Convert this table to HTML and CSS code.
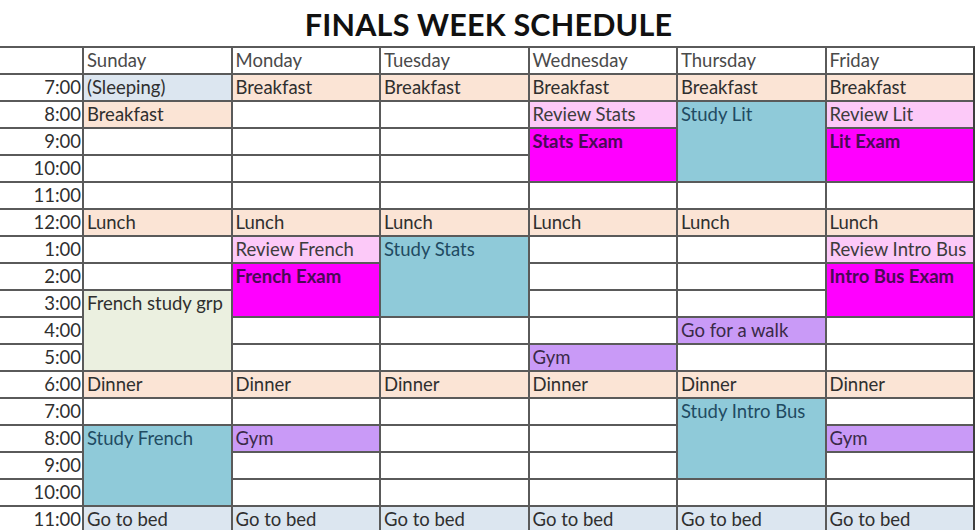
FILE: index.html
```html
<!DOCTYPE html>
<html>
<head>
<meta charset="utf-8">
<link rel="stylesheet" href="styles.css">
</head>
<body>
<div class="page">
  <h1 class="title">FINALS WEEK SCHEDULE</h1>
  <div class="sheet">
    <!-- header row -->
    <div class="c time" style="grid-area:1/1"></div>
    <div class="c day" style="grid-area:1/2">Sunday</div>
    <div class="c day" style="grid-area:1/3">Monday</div>
    <div class="c day" style="grid-area:1/4">Tuesday</div>
    <div class="c day" style="grid-area:1/5">Wednesday</div>
    <div class="c day" style="grid-area:1/6">Thursday</div>
    <div class="c day" style="grid-area:1/7">Friday</div>

    <!-- time labels -->
    <div class="c time" style="grid-area:2/1">7:00</div>
    <div class="c time" style="grid-area:3/1">8:00</div>
    <div class="c time" style="grid-area:4/1">9:00</div>
    <div class="c time" style="grid-area:5/1">10:00</div>
    <div class="c time" style="grid-area:6/1">11:00</div>
    <div class="c time" style="grid-area:7/1">12:00</div>
    <div class="c time" style="grid-area:8/1">1:00</div>
    <div class="c time" style="grid-area:9/1">2:00</div>
    <div class="c time" style="grid-area:10/1">3:00</div>
    <div class="c time" style="grid-area:11/1">4:00</div>
    <div class="c time" style="grid-area:12/1">5:00</div>
    <div class="c time" style="grid-area:13/1">6:00</div>
    <div class="c time" style="grid-area:14/1">7:00</div>
    <div class="c time" style="grid-area:15/1">8:00</div>
    <div class="c time" style="grid-area:16/1">9:00</div>
    <div class="c time" style="grid-area:17/1">10:00</div>
    <div class="c time" style="grid-area:18/1">11:00</div>

    <!-- Sunday -->
    <div class="c sleep" style="grid-area:2/2">(Sleeping)</div>
    <div class="c meal" style="grid-area:3/2">Breakfast</div>
    <div class="c" style="grid-area:4/2"></div>
    <div class="c" style="grid-area:5/2"></div>
    <div class="c" style="grid-area:6/2"></div>
    <div class="c meal" style="grid-area:7/2">Lunch</div>
    <div class="c" style="grid-area:8/2"></div>
    <div class="c" style="grid-area:9/2"></div>
    <div class="c group" style="grid-area:10/2/13/3">French study grp</div>
    <div class="c meal" style="grid-area:13/2">Dinner</div>
    <div class="c" style="grid-area:14/2"></div>
    <div class="c study" style="grid-area:15/2/18/3">Study French</div>
    <div class="c sleep" style="grid-area:18/2">Go to bed</div>

    <!-- Monday -->
    <div class="c meal" style="grid-area:2/3">Breakfast</div>
    <div class="c" style="grid-area:3/3"></div>
    <div class="c" style="grid-area:4/3"></div>
    <div class="c" style="grid-area:5/3"></div>
    <div class="c" style="grid-area:6/3"></div>
    <div class="c meal" style="grid-area:7/3">Lunch</div>
    <div class="c review" style="grid-area:8/3">Review French</div>
    <div class="c exam" style="grid-area:9/3/11/4">French Exam</div>
    <div class="c" style="grid-area:11/3"></div>
    <div class="c" style="grid-area:12/3"></div>
    <div class="c meal" style="grid-area:13/3">Dinner</div>
    <div class="c" style="grid-area:14/3"></div>
    <div class="c gym" style="grid-area:15/3">Gym</div>
    <div class="c" style="grid-area:16/3"></div>
    <div class="c" style="grid-area:17/3"></div>
    <div class="c sleep" style="grid-area:18/3">Go to bed</div>

    <!-- Tuesday -->
    <div class="c meal" style="grid-area:2/4">Breakfast</div>
    <div class="c" style="grid-area:3/4"></div>
    <div class="c" style="grid-area:4/4"></div>
    <div class="c" style="grid-area:5/4"></div>
    <div class="c" style="grid-area:6/4"></div>
    <div class="c meal" style="grid-area:7/4">Lunch</div>
    <div class="c study" style="grid-area:8/4/11/5">Study Stats</div>
    <div class="c" style="grid-area:11/4"></div>
    <div class="c" style="grid-area:12/4"></div>
    <div class="c meal" style="grid-area:13/4">Dinner</div>
    <div class="c" style="grid-area:14/4"></div>
    <div class="c" style="grid-area:15/4"></div>
    <div class="c" style="grid-area:16/4"></div>
    <div class="c" style="grid-area:17/4"></div>
    <div class="c sleep" style="grid-area:18/4">Go to bed</div>

    <!-- Wednesday -->
    <div class="c meal" style="grid-area:2/5">Breakfast</div>
    <div class="c review" style="grid-area:3/5">Review Stats</div>
    <div class="c exam" style="grid-area:4/5/6/6">Stats Exam</div>
    <div class="c" style="grid-area:6/5"></div>
    <div class="c meal" style="grid-area:7/5">Lunch</div>
    <div class="c" style="grid-area:8/5"></div>
    <div class="c" style="grid-area:9/5"></div>
    <div class="c" style="grid-area:10/5"></div>
    <div class="c" style="grid-area:11/5"></div>
    <div class="c gym" style="grid-area:12/5">Gym</div>
    <div class="c meal" style="grid-area:13/5">Dinner</div>
    <div class="c" style="grid-area:14/5"></div>
    <div class="c" style="grid-area:15/5"></div>
    <div class="c" style="grid-area:16/5"></div>
    <div class="c" style="grid-area:17/5"></div>
    <div class="c sleep" style="grid-area:18/5">Go to bed</div>

    <!-- Thursday -->
    <div class="c meal" style="grid-area:2/6">Breakfast</div>
    <div class="c study" style="grid-area:3/6/6/7">Study Lit</div>
    <div class="c" style="grid-area:6/6"></div>
    <div class="c meal" style="grid-area:7/6">Lunch</div>
    <div class="c" style="grid-area:8/6"></div>
    <div class="c" style="grid-area:9/6"></div>
    <div class="c" style="grid-area:10/6"></div>
    <div class="c gym" style="grid-area:11/6">Go for a walk</div>
    <div class="c" style="grid-area:12/6"></div>
    <div class="c meal" style="grid-area:13/6">Dinner</div>
    <div class="c study" style="grid-area:14/6/17/7">Study Intro Bus</div>
    <div class="c" style="grid-area:17/6"></div>
    <div class="c sleep" style="grid-area:18/6">Go to bed</div>

    <!-- Friday -->
    <div class="c meal" style="grid-area:2/7">Breakfast</div>
    <div class="c review" style="grid-area:3/7">Review Lit</div>
    <div class="c exam" style="grid-area:4/7/6/8">Lit Exam</div>
    <div class="c" style="grid-area:6/7"></div>
    <div class="c meal" style="grid-area:7/7">Lunch</div>
    <div class="c review" style="grid-area:8/7">Review Intro Bus</div>
    <div class="c exam" style="grid-area:9/7/11/8">Intro Bus Exam</div>
    <div class="c" style="grid-area:11/7"></div>
    <div class="c" style="grid-area:12/7"></div>
    <div class="c meal" style="grid-area:13/7">Dinner</div>
    <div class="c" style="grid-area:14/7"></div>
    <div class="c gym" style="grid-area:15/7">Gym</div>
    <div class="c" style="grid-area:16/7"></div>
    <div class="c" style="grid-area:17/7"></div>
    <div class="c sleep" style="grid-area:18/7">Go to bed</div>
  </div>
</div>
</body>
</html>
```
FILE: styles.css
```css
html, body {
  margin: 0;
  padding: 0;
  background: #ffffff;
  overflow: hidden;
}

.page {
  width: 975px;
  height: 530px;
  overflow: hidden;
  font-family: "Lato", "Open Sans", sans-serif;
}

.title {
  margin: 0;
  height: 46px;
  line-height: 48px;
  text-align: center;
  font-size: 30.5px;
  font-weight: 700;
  color: #111111;
  letter-spacing: 0.2px;
  padding-left: 2px;
}

.sheet {
  display: grid;
  grid-template-columns: 82px repeat(6, 1fr);
  grid-template-rows: repeat(18, 25px);
  gap: 2px;
  background: #5a5a5a;
  border-top: 2px solid #5a5a5a;
  border-right: 2px solid #3e3e3e;
  width: 973px;
}

.c {
  background: #ffffff;
  color: #2f2f2f;
  font-size: 18.5px;
  line-height: 25px;
  padding-left: 3px;
  white-space: nowrap;
  overflow: hidden;
}

.time {
  text-align: right;
  padding: 0 1px 0 0;
}

.day {
  color: #4a4a4a;
}

.meal { background: #fbe4d5; }
.sleep { background: #dce6f0; }
.review { background: #fcc9f8; color: #3c3c3c; }
.exam {
  background: #ff00ff;
  color: #4a0a55;
  font-weight: 700;
}
.study { background: #8fcad9; color: #1f4b62; }
.group { background: #ebf0e0; }
.gym { background: #c99af7; color: #3a2a48; }
```
